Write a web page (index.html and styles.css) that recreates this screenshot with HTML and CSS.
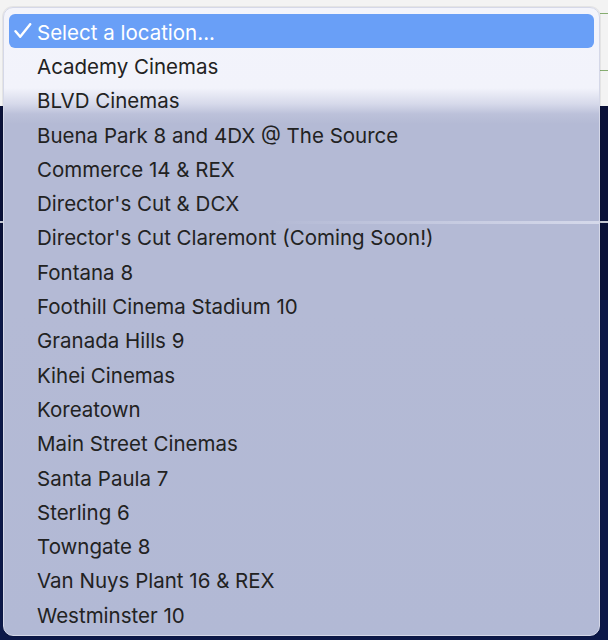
FILE: index.html
```html
<!DOCTYPE html>
<html lang="en">
<head>
    <meta charset="UTF-8">
    <title>Select a location</title>
    <link rel="stylesheet" href="styles.css">
</head>
<body>
<div class="menu">
    <ul class="options">
        <li class="current">
            <span class="mark">
                <svg width="18" height="16" viewBox="0 0 18 16">
                    <path d="M1.5 8.2 L6.2 13.8 L16.2 1.2" fill="none" stroke="#fff" stroke-width="2.4" stroke-linecap="round" stroke-linejoin="round"/>
                </svg>
            </span>
            Select a location...
        </li>
        <li><span class="mark"></span>Academy Cinemas</li>
        <li><span class="mark"></span>BLVD Cinemas</li>
        <li><span class="mark"></span>Buena Park 8 and 4DX @ The Source</li>
        <li><span class="mark"></span>Commerce 14 &amp; REX</li>
        <li><span class="mark"></span>Director's Cut &amp; DCX</li>
        <li><span class="mark"></span>Director's Cut Claremont (Coming Soon!)</li>
        <li><span class="mark"></span>Fontana 8</li>
        <li><span class="mark"></span>Foothill Cinema Stadium 10</li>
        <li><span class="mark"></span>Granada Hills 9</li>
        <li><span class="mark"></span>Kihei Cinemas</li>
        <li><span class="mark"></span>Koreatown</li>
        <li><span class="mark"></span>Main Street Cinemas</li>
        <li><span class="mark"></span>Santa Paula 7</li>
        <li><span class="mark"></span>Sterling 6</li>
        <li><span class="mark"></span>Towngate 8</li>
        <li><span class="mark"></span>Van Nuys Plant 16 &amp; REX</li>
        <li><span class="mark"></span>Westminster 10</li>
    </ul>
</div>
</body>
</html>
```

FILE: styles.css
```css
* {
    margin: 0;
    padding: 0;
    box-sizing: border-box;
}

ul {
    list-style: none;
}

html, body {
    height: 100%;
}

body {
    /* page behind the popup: light header, dark navy content */
    background:
        linear-gradient(#86ad70, #86ad70) right 13px / 8px 1px no-repeat,
        linear-gradient(#86ad70, #86ad70) right 70px / 8px 1px no-repeat,
        linear-gradient(to bottom,
            #f3f3f3 0, #f3f3f3 106px,
            #0a1138 106px, #0a1138 221px,
            #c6c9d4 221px, #c6c9d4 223px,
            #0a1138 223px, #0a1138 300px,
            #0c1848 300px, #0c1848 100%);
    padding: 7px 0 0 3px;
    font-family: Inter, "Helvetica Neue", "Liberation Sans", sans-serif;
    overflow: hidden;
}

.menu {
    width: 597px;
    height: 629px;
    border: 1px solid #d5d8e8;
    border-radius: 10px;
    padding: 6px 5px;
    background:
        linear-gradient(to left, rgba(240, 242, 252, .55), rgba(240, 242, 252, 0) 55%) 0 213px / 100% 3px no-repeat,
        linear-gradient(to bottom,
            #f3f4fb 0, #f2f3fb 80px,
            #d6d9ea 96px, #bcc1da 106px,
            #b4bad5 116px, #b4bad5 300px,
            #b2b9d5 100%);
    box-shadow: 0 0 0 1px rgba(0, 0, 0, .06);
}

.options li {
    display: flex;
    align-items: center;
    height: 34.3px;
    padding-top: 2px;
    font-size: 20.5px;
    color: #222222;
    white-space: nowrap;
    border-radius: 6px;
}

.options li.current {
    background-color: #699ff7;
    color: #ffffff;
}

.mark {
    flex: 0 0 28px;
    display: flex;
    align-items: center;
    padding-left: 5px;
    margin-top: -2px;
}
```
